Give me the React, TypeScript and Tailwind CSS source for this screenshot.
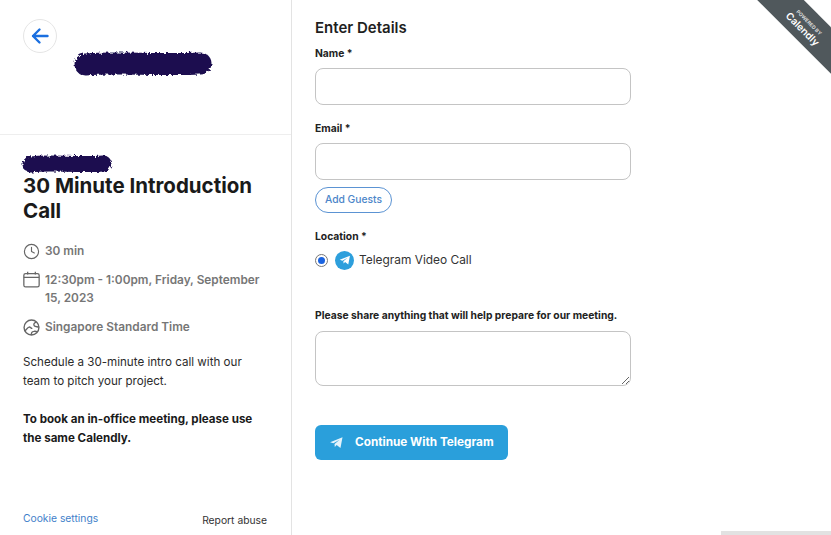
import { Clock } from 'lucide-react';

function Scribble({ width, height, id }: { width: number; height: number; id: string }) {
  const mid = height / 2;
  return (
    <svg width={width} height={height} viewBox={`0 0 ${width} ${height}`} className="block">
      <defs>
        <filter id={id} filterUnits="userSpaceOnUse" x="0" y="0" width={width} height={height}>
          <feTurbulence type="fractalNoise" baseFrequency="0.35" numOctaves="2" seed="4" result="noise" />
          <feDisplacementMap in="SourceGraphic" in2="noise" scale="5" />
        </filter>
      </defs>
      <path
        d={`M${mid} ${mid + 1} C ${width * 0.3} ${mid - 2}, ${width * 0.6} ${mid + 2}, ${width - mid} ${mid}`}
        stroke="#1c1150"
        strokeWidth={height - 5}
        strokeLinecap="round"
        fill="none"
        filter={`url(#${id})`}
      />
    </svg>
  );
}

function TelegramPlane({ className, fill }: { className: string; fill: string }) {
  return (
    <svg viewBox="0 0 24 24" className={className}>
      <path d="M3 11.6 20.5 4.6 17.6 19.6 12.2 15.6 9.6 18.2 9.2 14 16.4 8 7.6 13.2Z" fill={fill} />
    </svg>
  );
}

function DetailsPanel() {
  return (
    <aside className="w-[292px] h-full shrink-0 border-r border-[#e3e3e3] flex flex-col relative">
      <header className="h-[135px] shrink-0 border-b border-[#eeeeee] flex justify-center pt-[50px] pr-[6px]">
        <button
          type="button"
          className="absolute left-[23px] top-[19px] w-[34px] h-[34px] rounded-full border border-[#e5e5e5] flex items-center justify-center"
        >
          <svg viewBox="0 0 20 20" className="w-[20px] h-[20px]" fill="none" stroke="#1a6fe0" strokeWidth="2.4" strokeLinecap="round" strokeLinejoin="round">
            <path d="M17.5 10H3M9.5 3.5 3 10l6.500 6.500" />
          </svg>
        </button>
        <Scribble width={142} height={27} id="logo-scribble" />
      </header>

      <div className="pl-[23px] pr-[24px] pt-[18px] flex-1">
        <div className="-ml-[3px] h-[20px]">
          <Scribble width={94} height={21} id="name-scribble" />
        </div>
        <h1 className="text-[20.5px] leading-[25px] font-bold text-[#1a1a1a]">30 Minute Introduction Call</h1>

        <div className="mt-[19px] flex flex-col gap-[11px] text-[11.85px] leading-[18px] font-semibold text-[#767676]">
          <div className="flex items-center gap-[5px]">
            <Clock size={17} strokeWidth={1.6} className="shrink-0 text-[#666666]" />
            <span>30 min</span>
          </div>
          <div className="flex items-start gap-[5px]">
            <svg viewBox="0 0 16 16" className="w-[17px] h-[17px] shrink-0 text-[#666666]" fill="none" stroke="currentColor" strokeWidth="1.2">
              <rect x="0.8" y="2.4" width="14.4" height="12.6" rx="1.6" />
              <path d="M0.8 6h14.4M4.4 0.8v2.6M11.6 0.8v2.6" />
            </svg>
            <span>12:30pm - 1:00pm, Friday, September 15, 2023</span>
          </div>
          <div className="flex items-center gap-[5px]">
            <svg viewBox="0 0 16 16" className="w-[17px] h-[17px] shrink-0 text-[#666666]" fill="none" stroke="currentColor" strokeWidth="1.3">
              <circle cx="8" cy="8" r="7" />
              <path d="M1.600 11c1.800-.4 2.200-3 4-3.400 1.600-.4 1.800 1.600 3.200 1.200M12.600 3c-2.400.4-3 2.400-1.800 3.600 1 1 3.200.4 4.200 1.200M8 15c-.4-2 .6-3.200 2.200-3.400 1.200-.2 2.400 0 3.200.6" />
            </svg>
            <span>Singapore Standard Time</span>
          </div>
        </div>

        <p className="mt-[17px] text-[11.6px] leading-[19px] text-[#2b2b2b]">
          Schedule a 30-minute intro call with our team to pitch your project.
        </p>
        <p className="mt-[19px] text-[11.6px] leading-[19px] font-bold text-[#1a1a1a]">
          To book an in-office meeting, please use the same Calendly.
        </p>
      </div>

      <footer className="h-[24px] shrink-0 pl-[23px] pr-[24px] flex justify-between text-[10.3px] leading-[14px]">
        <a className="text-[#3f7fca]">Cookie settings</a>
        <a className="text-[#333333] mt-[2px]">Report abuse</a>
      </footer>
    </aside>
  );
}

function Label({ children }: { children: string }) {
  return <label className="block text-[10.3px] leading-[14px] font-bold text-[#222222]">{children}</label>;
}

function BookingForm() {
  const inputClass = 'block mt-[8px] w-[316px] h-[37px] rounded-[8px] border border-[#c4c4c4] bg-white';
  return (
    <main className="flex-1 pl-[23px] pt-[19px]">
      <h2 className="text-[15px] leading-[18px] font-semibold text-[#1f1f1f]">Enter Details</h2>

      <div className="mt-[9px]">
        <Label>Name *</Label>
        <input type="text" className={inputClass} />
      </div>
      <div className="mt-[16px]">
        <Label>Email *</Label>
        <input type="email" className={inputClass} />
      </div>

      <button
        type="button"
        className="block mt-[7px] w-[77px] h-[26px] rounded-full border border-[#5b93d3] text-[10.3px] font-medium text-[#4c86c9]"
      >
        Add Guests
      </button>

      <div className="mt-[16px]">
        <Label>Location *</Label>
        <div className="mt-[7px] flex items-center h-[20px]">
          <span className="w-[13px] h-[13px] rounded-full border border-[#777777] flex items-center justify-center">
            <span className="w-[7px] h-[7px] rounded-full bg-[#1a63e0]" />
          </span>
          <span className="ml-[7px] w-[19px] h-[19px] rounded-full bg-[#2d9fdc] flex items-center justify-center">
            <TelegramPlane className="w-[14px] h-[14px]" fill="#ffffff" />
          </span>
          <span className="ml-[5px] text-[11.9px] text-[#333333]">Telegram Video Call</span>
        </div>
      </div>

      <div className="mt-[38px]">
        <Label>Please share anything that will help prepare for our meeting.</Label>
        <textarea className="block mt-[9px] w-[316px] h-[55px] rounded-[8px] border border-[#c4c4c4] bg-white" />
      </div>

      <button
        type="button"
        className="mt-[39px] w-[193px] h-[35px] rounded-[6px] bg-[#2a9fdb] flex items-center pl-[13px] text-[11.75px] font-bold text-white"
      >
        <TelegramPlane className="w-[17px] h-[17px]" fill="#e4f3fb" />
        <span className="ml-[10px]">Continue With Telegram</span>
      </button>
    </main>
  );
}

export default function App() {
  return (
    <div className="relative w-[831px] h-[535px] overflow-hidden bg-white flex font-['Inter','Liberation_Sans',sans-serif]">
      <DetailsPanel />
      <BookingForm />

      {/* Powered by ribbon */}
      <div className="absolute right-0 top-0 w-[74px] h-[74px] overflow-hidden">
        <div className="absolute left-[-11px] top-[9px] w-[120px] h-[33px] pt-[2px] rotate-45 bg-[#50585c] text-white flex flex-col items-center justify-center gap-[1px]">
          <span className="text-[5px] leading-[6px] font-bold text-[#dcdcdc]">POWERED BY</span>
          <span className="text-[10px] leading-[11px] font-semibold">Calendly</span>
        </div>
      </div>

      <div className="absolute right-0 bottom-0 w-[110px] h-[4px] bg-[#e2e2e2]" />
    </div>
  );
}
